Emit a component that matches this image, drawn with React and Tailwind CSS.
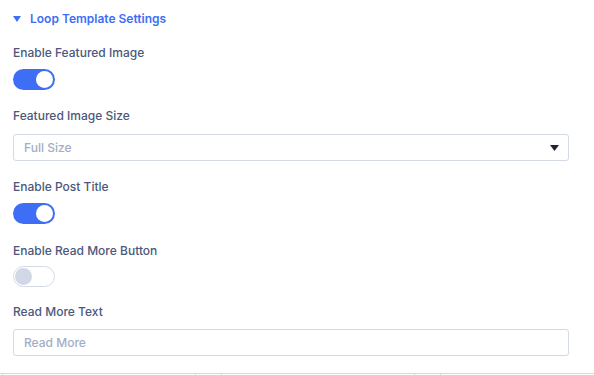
import React, { useState } from "react";

function Toggle({ on, onChange }) {
  return (
    <button
      onClick={onChange}
      className={
        on
          ? "flex h-[21px] w-[42px] items-center justify-end rounded-full bg-[#3d6ef5] px-[2px]"
          : "flex h-[21px] w-[42px] items-center justify-start rounded-full border border-[#d3d9e6] bg-white px-[1px]"
      }
    >
      <span
        className={
          on
            ? "block h-[17px] w-[17px] rounded-full bg-white"
            : "block h-[17px] w-[17px] rounded-full bg-[#d1d7e4]"
        }
      />
    </button>
  );
}

function Label({ children }) {
  return (
    <div className="text-[12px] font-medium leading-4 text-[#4b587c]">{children}</div>
  );
}

export default function App() {
  const [featured, setFeatured] = useState(true);
  const [postTitle, setPostTitle] = useState(true);
  const [readMore, setReadMore] = useState(false);
  const [readMoreText, setReadMoreText] = useState("");

  return (
    <div
      className="flex h-[375px] w-[594px] flex-col overflow-hidden bg-white"
      style={{ fontFamily: "Inter, 'Noto Sans', sans-serif" }}
    >
      <div className="px-[13px]">
        <div className="mt-[11px] flex items-center gap-[9px] text-[12px] font-semibold leading-4 text-[#3d6ef5]">
          <svg width="8" height="6" viewBox="0 0 8 6" className="-mt-[1px]">
            <path d="M0 0 L8 0 L4 6 Z" fill="#3d6ef5" />
          </svg>
          Loop Template Settings
        </div>

        <div className="mt-[18px]">
          <Label>Enable Featured Image</Label>
          <div className="mt-[8px]">
            <Toggle on={featured} onChange={() => setFeatured(!featured)} />
          </div>
        </div>

        <div className="mt-[18px]">
          <Label>Featured Image Size</Label>
          <div className="mt-[10px] flex h-[27px] w-[556px] items-center justify-between rounded-[3px] border border-[#d3d9e6] pl-[10px] pr-[9px]">
            <span className="text-[12px] font-medium text-[#a3adc6]">Full Size</span>
            <svg width="9" height="6" viewBox="0 0 9 6">
              <path d="M0 0 L9 0 L4.5 6 Z" fill="#1f2533" />
            </svg>
          </div>
        </div>

        <div className="mt-[18px]">
          <Label>Enable Post Title</Label>
          <div className="mt-[8px]">
            <Toggle on={postTitle} onChange={() => setPostTitle(!postTitle)} />
          </div>
        </div>

        <div className="mt-[19px]">
          <Label>Enable Read More Button</Label>
          <div className="mt-[7px]">
            <Toggle on={readMore} onChange={() => setReadMore(!readMore)} />
          </div>
        </div>

        <div className="mt-[17px]">
          <Label>Read More Text</Label>
          <input
            value={readMoreText}
            onChange={(e) => setReadMoreText(e.target.value)}
            placeholder="Read More"
            className="mt-[9px] block h-[27px] w-[556px] rounded-[3px] border border-[#d3d9e6] pl-[10px] text-[12px] font-medium text-[#4b587c] outline-none placeholder:text-[#a3adc6]"
          />
        </div>
      </div>

      <div className="mt-auto flex h-[2px] border-t border-[#d3d9e6]">
        <div className="w-[2px]" />
        <div className="w-[193px] border-l border-[#d3d9e6]" />
        <div className="w-[26px] border-l border-[#d3d9e6]" />
        <div className="w-[193px] border-l border-[#d3d9e6]" />
        <div className="w-[26px] border-l border-[#d3d9e6]" />
        <div className="flex-1 border-l border-[#d3d9e6]" />
      </div>
    </div>
  );
}
